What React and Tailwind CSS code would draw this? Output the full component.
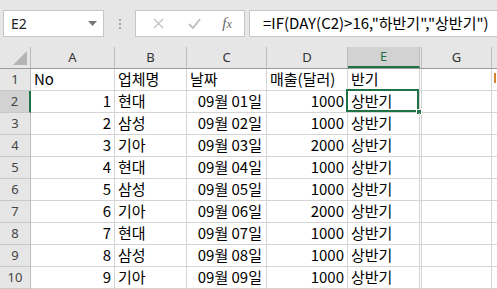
import React from "react";

const cols = [
  { key: "A", w: "w-[84px]" },
  { key: "B", w: "w-[72px]" },
  { key: "C", w: "w-[80px]" },
  { key: "D", w: "w-[81px]" },
  { key: "E", w: "w-[72px]" },
];

const rows = [
  ["1", "현대", "09월 01일", "1000"],
  ["2", "삼성", "09월 02일", "1000"],
  ["3", "기아", "09월 03일", "2000"],
  ["4", "현대", "09월 04일", "1000"],
  ["5", "삼성", "09월 05일", "1000"],
  ["6", "기아", "09월 06일", "2000"],
  ["7", "현대", "09월 07일", "1000"],
  ["8", "삼성", "09월 08일", "1000"],
  ["9", "기아", "09월 09일", "1000"],
];

const cellFont = { fontFamily: '"Noto Sans CJK KR", "Noto Sans", sans-serif' };
const uiFont = { fontFamily: '"Noto Sans", "Open Sans", sans-serif' };

function Cell({ w, align = "left", children, selected }) {
  return (
    <div
      className={`${w} h-[22px] shrink-0 border-r border-b border-[#d4d4d4] flex items-end pb-[1px] text-[15px] leading-[20px] text-black relative ${
        align === "right" ? "justify-end pr-[3px]" : "pl-[3px]"
      }`}
      style={cellFont}
    >
      {children}
      {selected && (
        <>
          <div className="absolute -left-[2px] -top-[2px] -right-[0px] -bottom-[0px] border-2 border-[#217346]" />
          <div className="absolute -right-[3px] -bottom-[3px] w-[6px] h-[6px] bg-[#217346] border border-white" />
        </>
      )}
    </div>
  );
}

function RowHead({ n, active }) {
  return (
    <div
      className={`w-[31px] h-[22px] shrink-0 border-b border-[#c8c8c8] flex items-center justify-center text-[13px] text-[#444] ${
        active ? "bg-[#d2d2d2] border-r-2 border-r-[#217346]" : "bg-[#e6e6e6] border-r border-r-[#bdbdbd]"
      }`}
      style={uiFont}
    >
      {n}
    </div>
  );
}

function Tail() {
  return (
    <>
      <div className="w-[2px] h-[22px] shrink-0 border-r border-b border-[#d4d4d4]" />
      <div className="w-[70px] h-[22px] shrink-0 border-r border-b border-[#d4d4d4]" />
      <div className="flex-1 h-[22px] border-b border-[#d4d4d4]" />
    </>
  );
}

export default function App() {
  return (
    <div className="w-[497px] h-[289px] overflow-hidden bg-white select-none">
      {/* formula bar */}
      <div className="h-[47px] bg-[#e6e6e6] flex items-start pt-[10px] pl-[3px]">
        <div
          className="w-[101px] h-[27px] bg-white border border-[#c6c6c6] flex items-center justify-between pl-[7px] pr-[6px] text-[14px] text-[#222]"
          style={uiFont}
        >
          <span>E2</span>
          <svg width="9" height="5" viewBox="0 0 9 5">
            <path d="M0 0h9L4.5 5z" fill="#777" />
          </svg>
        </div>
        <div className="w-[31px] h-[27px] flex flex-col items-center justify-center gap-[2px]">
          <div className="w-[2px] h-[2px] bg-[#a8a8a8]" />
          <div className="w-[2px] h-[2px] bg-[#a8a8a8]" />
          <div className="w-[2px] h-[2px] bg-[#a8a8a8]" />
        </div>
        <div className="w-[110px] h-[27px] bg-white border border-[#c6c6c6] flex items-center">
          <div className="w-[36px] flex justify-center ml-[4px]">
            <svg width="11" height="11" viewBox="0 0 11 11">
              <path d="M1 1l9 9M10 1l-9 9" stroke="#c2c2c2" strokeWidth="1.4" />
            </svg>
          </div>
          <div className="w-[36px] flex justify-center">
            <svg width="13" height="11" viewBox="0 0 13 11">
              <path d="M1 6l4 4 7-9" stroke="#c2c2c2" strokeWidth="2" fill="none" />
            </svg>
          </div>
          <div
            className="w-[30px] flex justify-center text-[15px] italic text-[#666]"
            style={{ fontFamily: '"Liberation Serif", serif' }}
          >
            <span>f<span className="text-[12px]">x</span></span>
          </div>
        </div>
        <div
          className="flex-1 ml-[4px] h-[27px] bg-white border border-[#c6c6c6] border-r-0 flex items-center pl-[13px] text-[15px] text-black whitespace-nowrap overflow-hidden"
          style={cellFont}
        >
          =IF(DAY(C2)&gt;16,"하반기","상반기")
        </div>
      </div>

      {/* column headers */}
      <div className="flex h-[22px] bg-[#e6e6e6] border-b border-[#9b9b9b]" style={uiFont}>
        <div className="w-[31px] shrink-0 border-r border-[#bdbdbd] relative">
          <svg className="absolute right-[3px] bottom-[3px]" width="14" height="14" viewBox="0 0 14 14">
            <path d="M14 0v14H0z" fill="#b4b4b4" />
          </svg>
        </div>
        {cols.map((c) => (
          <div
            key={c.key}
            className={`${c.w} shrink-0 border-r border-[#bdbdbd] flex items-center justify-center text-[13px] text-[#333] ${
              c.key === "E" ? "bg-[#d2d2d2] border-b-2 border-b-[#217346] text-[#217346]" : ""
            }`}
          >
            {c.key}
          </div>
        ))}
        <div className="w-[2px] shrink-0 border-r border-[#bdbdbd]" />
        <div className="w-[70px] shrink-0 border-r border-[#bdbdbd] flex items-center justify-center text-[13px] text-[#333]">
          G
        </div>
        <div className="flex-1" />
      </div>

      {/* row 1 */}
      <div className="flex">
        <RowHead n="1" />
        <Cell w="w-[84px]">No</Cell>
        <Cell w="w-[72px]">업체명</Cell>
        <Cell w="w-[80px]">날짜</Cell>
        <Cell w="w-[81px]">매출(달러)</Cell>
        <Cell w="w-[72px]">반기</Cell>
        <Tail />
        <div className="absolute left-[494px] top-[73px] w-[2px] h-[10px] bg-[#d9822b]" />
      </div>

      {rows.map((r, i) => (
        <div className="flex" key={i}>
          <RowHead n={String(i + 2)} active={i === 0} />
          <Cell w="w-[84px]" align="right">{r[0]}</Cell>
          <Cell w="w-[72px]">{r[1]}</Cell>
          <Cell w="w-[80px]" align="right">
            <span className="pr-[1px]">{r[2]}</span>
          </Cell>
          <Cell w="w-[81px]" align="right">{r[3]}</Cell>
          <Cell w="w-[72px]" selected={i === 0}>상반기</Cell>
          <Tail />
        </div>
      ))}
    </div>
  );
}
